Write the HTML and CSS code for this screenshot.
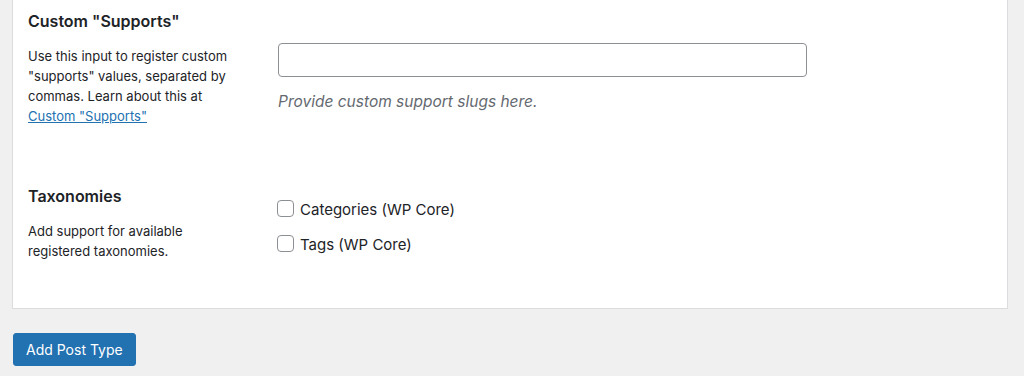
FILE: index.html
```html
<!DOCTYPE html>
<html lang="en">
<head>
    <meta charset="UTF-8">
    <title>Add Post Type</title>
    <link rel="stylesheet" href="styles.css">
</head>
<body>
    <div class="panel">
        <!-- Custom supports -->
        <div class="row row-supports">
            <div class="row-head">
                <h3>Custom "Supports"</h3>
                <p>Use this input to register custom "supports" values, separated by commas. Learn about this at <a href="#">Custom "Supports"</a></p>
            </div>
            <div class="row-field">
                <input type="text" class="text-input">
                <p class="help">Provide custom support slugs here.</p>
            </div>
        </div>

        <!-- Taxonomies -->
        <div class="row row-tax">
            <div class="row-head">
                <h3>Taxonomies</h3>
                <p>Add support for available registered taxonomies.</p>
            </div>
            <div class="row-field checks">
                <label class="check"><input type="checkbox"> Categories (WP Core)</label>
                <label class="check"><input type="checkbox"> Tags (WP Core)</label>
            </div>
        </div>
    </div>

    <button class="button-primary">Add Post Type</button>
</body>
</html>
```

FILE: styles.css
```css
* {
    margin: 0;
    padding: 0;
    box-sizing: border-box;
}
body {
    font-family: Inter, "Liberation Sans", Arial, sans-serif;
    background-color: #f0f0f1;
    color: #1d2327;
    padding-left: 12px;
}
.panel {
    width: 996px;
    background-color: #fff;
    border: 1px solid #dcdcde;
    border-top: none;
    padding: 11px 15px 47px 15px;
}
.row {
    display: flex;
}
.row-tax {
    margin-top: 60px;
}
.row-head {
    width: 250px;
    padding-right: 40px;
}
.row-head h3 {
    font-size: 16px;
    line-height: 20px;
    font-weight: 600;
}
.row-head p {
    margin-top: 15px;
    font-size: 13px;
    line-height: 20px;
}
.row-head a {
    color: #2271b1;
}
.row-field {
    flex: 1;
}
.row-supports .row-field {
    padding-top: 32px;
}
.checks {
    display: flex;
    flex-direction: column;
    gap: 18px;
    padding-top: 14px;
}
.text-input {
    display: block;
    width: 529px;
    height: 34px;
    border: 1px solid #8c8f94;
    border-radius: 4px;
    padding: 0 8px;
    font-family: inherit;
    font-size: 14px;
}
.help {
    margin-top: 15px;
    font-size: 15.5px;
    line-height: 20px;
    font-style: italic;
    color: #646970;
}
.check {
    display: flex;
    align-items: center;
    height: 17px;
    font-size: 15px;
    gap: 5px;
    padding-top: 1px;
}
.check input {
    appearance: none;
    width: 17px;
    height: 17px;
    margin-top: -1px;
    border: 1px solid #8c8f94;
    border-radius: 4px;
    background: #fff;
    margin-left: -1px;
    margin-right: 1px;
}
.button-primary {
    display: block;
    margin-top: 24px;
    margin-left: 1px;
    height: 33px;
    padding: 0 12px;
    background-color: #2271b1;
    border: 1px solid #2271b1;
    border-radius: 3px;
    color: #fff;
    font-family: inherit;
    font-size: 14px;
}
```
